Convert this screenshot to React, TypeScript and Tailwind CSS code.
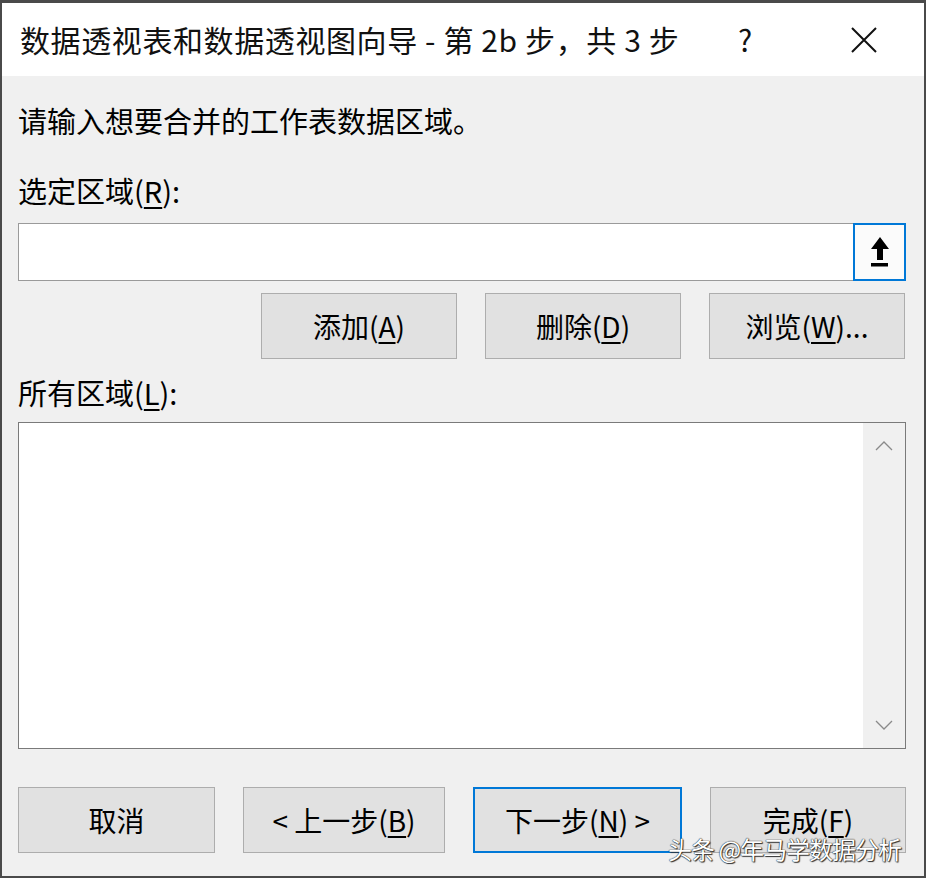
import React from 'react';

const font = "font-['Microsoft_YaHei','Noto_Sans_CJK_SC',sans-serif]";

const Btn: React.FC<{ w: string; focused?: boolean; children: React.ReactNode }> = ({ w, focused, children }) => (
  <button
    className={
      focused
        ? `${w} h-[66px] bg-[#e1e1e1] border-2 border-[#0078d7] text-[28px] text-black flex items-center justify-center`
        : `${w} h-[66px] bg-[#e1e1e1] border border-[#adadad] text-[28px] text-black flex items-center justify-center`
    }
  >
    {children}
  </button>
);

const U: React.FC<{ children: React.ReactNode }> = ({ children }) => (
  <span className="underline underline-offset-[4px] decoration-[1.5px]">{children}</span>
);

const Chevron: React.FC<{ up?: boolean }> = ({ up }) => (
  <svg width="18" height="10" viewBox="0 0 18 10" fill="none">
    <path d={up ? 'M1 9 L9 1 L17 9' : 'M1 1 L9 9 L17 1'} stroke="#8a8a8a" strokeWidth="1.3" />
  </svg>
);

export default function App() {
  return (
    <div className={`relative w-[926px] h-[878px] bg-[#f0f0f0] border-x-2 border-b-2 border-t-[3px] border-[#4a4a4a] flex flex-col ${font}`}>
      {/* title bar */}
      <div className="h-[73px] bg-white flex items-center pl-[18px] shrink-0">
        <span className="text-[30px] text-[#111] tracking-[0.6px]">数据透视表和数据透视图向导 - 第 2b 步，共 3 步</span>
        <span className="ml-auto w-[40px] text-center text-[30px] text-[#111] mr-[85px]">?</span>
        <svg width="28" height="28" viewBox="0 0 28 28" className="mr-[46px]">
          <path d="M2 2 L26 26 M26 2 L2 26" stroke="#111" strokeWidth="2" />
        </svg>
      </div>

      {/* body */}
      <div className="flex flex-col pl-[16px] pr-[18px] text-black">
        <div className="mt-[26px] h-[36px] leading-[36px] text-[29px]">请输入想要合并的工作表数据区域。</div>
        <div className="mt-[34px] h-[36px] leading-[36px] text-[29px]">
          选定区域(<U>R</U>):
        </div>

        <div className="mt-[15px] flex h-[58px]">
          <div className="flex-1 bg-white border border-[#9a9a9a]" />
          <div className="w-[53px] -ml-[2px] bg-[#fbfbfb] border-2 border-[#0078d7] flex items-center justify-center">
            <svg width="20" height="32" viewBox="0 0 20 32">
              <path d="M10 1 L19 13 L13 13 L13 24 L7 24 L7 13 L1 13 Z" fill="#000" />
              <rect x="1" y="27" width="17" height="3.5" fill="#000" />
            </svg>
          </div>
        </div>

        <div className="mt-[12px] flex justify-end gap-[28px] pr-[1px]">
          <Btn w="w-[196px]">添加(<U>A</U>)</Btn>
          <Btn w="w-[196px]">删除(<U>D</U>)</Btn>
          <Btn w="w-[196px]">浏览(<U>W</U>)...</Btn>
        </div>

        <div className="mt-[15px] h-[36px] leading-[36px] text-[29px]">
          所有区域(<U>L</U>):
        </div>

        <div className="mt-[12px] h-[327px] bg-white border-[1.5px] border-[#7a7a7a] flex">
          <div className="flex-1" />
          <div className="w-[42px] bg-[#f0f0f0] flex flex-col items-center justify-between py-[18px]">
            <Chevron up />
            <Chevron />
          </div>
        </div>

        <div className="mt-[38px] flex gap-[28px]">
          <Btn w="w-[197px]">取消</Btn>
          <Btn w="w-[202px]">&lt; 上一步(<U>B</U>)</Btn>
          <Btn w="w-[209px]" focused>
            下一步(<U>N</U>) &gt;
          </Btn>
          <Btn w="w-[196px]">完成(<U>F</U>)</Btn>
        </div>
      </div>

      {/* watermark overlay */}
      <div className="absolute left-[666px] top-[828px] text-[24px] text-white tracking-[-1px] [text-shadow:0_0_1px_#222,0_0_1px_#222,1px_1px_1px_#333]">
        头条 @年马学数据分析
      </div>
    </div>
  );
}
